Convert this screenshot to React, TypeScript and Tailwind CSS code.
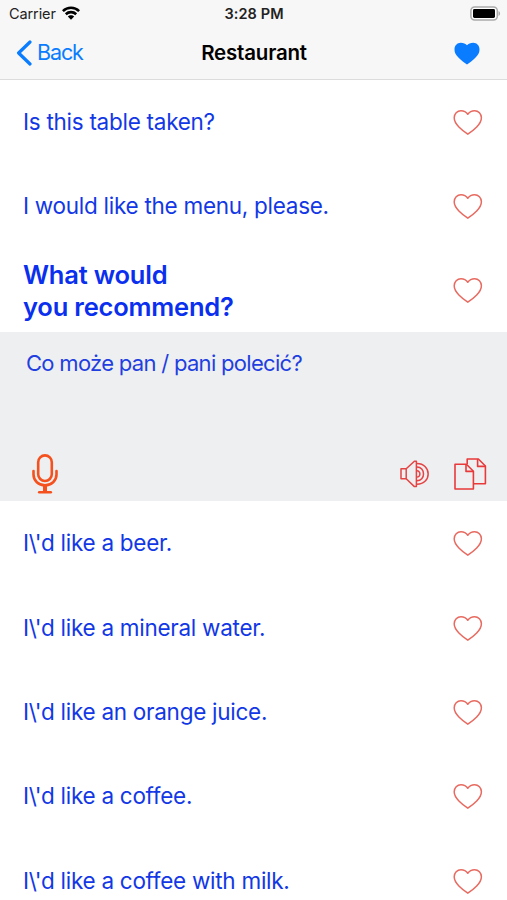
import { useState } from 'react';

interface Phrase {
  id: number;
  text: string;
}

const phrasesBefore: Phrase[] = [
  { id: 1, text: 'Is this table taken?' },
  { id: 2, text: 'I would like the menu, please.' },
];

const phrasesAfter: Phrase[] = [
  { id: 4, text: "I\\'d like a beer." },
  { id: 5, text: "I\\'d like a mineral water." },
  { id: 6, text: "I\\'d like an orange juice." },
  { id: 7, text: "I\\'d like a coffee." },
  { id: 8, text: "I\\'d like a coffee with milk." },
];

function HeartOutline({ filled }: { filled: boolean }) {
  return (
    <svg className="mt-[1px]" width="30" height="27" viewBox="0 0 30 27" fill={filled ? '#e8594f' : 'none'}>
      <path
        d="M14.8 25.2C12.4 23.6 9 21.2 5.9 18C2.9 14.9 1.2 12 1.2 8.8C1.2 4.8 4.2 1.7 8 1.7C11 1.7 13.2 2.9 14.8 5.2C16.4 2.9 18.6 1.7 21.6 1.7C25.4 1.7 28.4 4.8 28.4 8.8C28.4 12 26.7 14.9 23.7 18C20.6 21.2 17.2 23.6 14.8 25.2Z"
        stroke="#e8695f"
        strokeWidth="1.5"
        strokeLinejoin="round"
      />
    </svg>
  );
}

function StatusBar() {
  return (
    <div className="grid h-[28px] grid-cols-[1fr_auto_1fr] items-center pl-[8px] pr-[6px] text-[#222]">
      <div className="flex items-center gap-[6px]">
        <span className="pl-px text-[14.5px] leading-none tracking-[-0.1px]">Carrier</span>
        <svg className="-mt-[2px]" width="18" height="14" viewBox="0 0 18 14" fill="none" stroke="#000" strokeWidth="2.6">
          <path d="M0.9 5.1C5.4 0.7 12.6 0.7 17.1 5.1" />
          <path d="M3.8 8.2C6.7 5.4 11.3 5.4 14.2 8.2" />
          <path d="M9 13.8L5.8 10.6C7.5 8.9 10.5 8.9 12.2 10.6Z" fill="#000" stroke="none" />
        </svg>
      </div>
      <span className="-ml-px text-center text-[14.5px] font-semibold leading-none tracking-[0.1px]">3:28 PM</span>
      <svg className="-mt-[2px] justify-self-end" width="31" height="15" viewBox="0 0 31 15">
        <rect x="0.9" y="0.9" width="26.4" height="13.2" rx="3.8" fill="#fff" stroke="#aaa" strokeWidth="1.5" />
        <rect x="3" y="3" width="22" height="9" rx="1.4" fill="#000" />
        <path d="M28.5 5C30.6 5.8 30.6 9.2 28.5 10Z" fill="#aaa" />
      </svg>
    </div>
  );
}

function NavBar() {
  return (
    <div className="grid h-[50px] grid-cols-[1fr_auto_1fr] items-center pl-[16px] pr-[16px]">
      <button className="flex items-center gap-[5px] text-[#0a7cff]">
        <svg width="16" height="26" viewBox="0 0 16 26" fill="none">
          <path d="M14 2L2.6 13L14 24" stroke="currentColor" strokeWidth="3.2" strokeLinecap="round" strokeLinejoin="round" />
        </svg>
        <span className="text-[21.5px] leading-none tracking-[-1.1px]">Back</span>
      </button>
      <h1 className="whitespace-nowrap pl-px text-center text-[20.5px] font-semibold leading-none tracking-[-0.2px] text-black">
        Restaurant
      </h1>
      <svg className="mr-[11px] justify-self-end" width="26" height="23" viewBox="0 0 26 23">
        <path
          d="M13 22.4C11 21 7.5 18.5 4.4 15.4C1.8 12.8 0.5 10.6 0.5 7.4C0.5 3.6 3.2 0.8 6.8 0.8C9.4 0.8 11.7 1.8 13 3.2C14.3 1.8 16.6 0.8 19.2 0.8C22.8 0.8 25.5 3.6 25.5 7.4C25.5 10.6 24.2 12.8 21.6 15.4C18.5 18.5 15 21 13 22.4Z"
          fill="#0a7cff"
        />
      </svg>
    </div>
  );
}

function TranslationPanel() {
  return (
    <div className="flex h-[168.8px] flex-col justify-between bg-[#eeeff1] pl-[26px] pr-[20px] pt-[15.5px]">
      <p className="text-[22px] leading-[30px] tracking-[-0.7px] text-[#1f3fe0]">Co może pan / pani polecić?</p>
      <div className="flex items-center pb-[7px] pl-[6px]">
        <svg width="26" height="40" viewBox="0 0 26 40" fill="none" stroke="#f4511e" strokeWidth="2.6" strokeLinecap="round">
          <rect x="6.2" y="1.4" width="13.6" height="25.6" rx="6.8" />
          <path d="M1.5 17V20.5C1.5 26.8 6.6 31.3 13 31.3C19.4 31.3 24.5 26.8 24.5 20.5V17" />
          <path d="M13 31.3V38" strokeWidth="4" strokeLinecap="butt" />
          <path d="M7.2 38.2H18.8" />
        </svg>
        <svg className="ml-auto" width="30" height="28" viewBox="0 0 30 28" fill="none" stroke="#e54444" strokeWidth="1.5" strokeLinejoin="round">
          <path d="M1 8.8H6.2V18.8H1Z" />
          <path d="M6.2 8.8L14.4 1.2H16.4V26.6H14.4L6.2 18.8" />
          <path d="M16.6 10.8C21 10.4 21 17.4 16.6 17" />
          <path d="M16.6 7C25.8 6.6 25.8 21.2 16.6 20.8" />
          <path d="M16.6 3.6C32 3.4 32 24.4 16.6 24.2" />
        </svg>
        <svg className="ml-[24px]" width="33" height="32" viewBox="0 0 33 32" fill="none" stroke="#e83a3a" strokeWidth="1.6" strokeLinejoin="round">
          <path d="M1 6.3H12.4L19.4 13.2V31H1Z" />
          <path d="M12 6.3V13.4H19.4" />
          <path d="M13.2 6.3V1H24.4L31.4 8V25.8H19.4" />
          <path d="M23.6 1V8.4H31.4" />
        </svg>
      </div>
    </div>
  );
}

export default function App() {
  const [favorites, setFavorites] = useState<number[]>([]);

  const toggleFavorite = (id: number) => {
    setFavorites((prev) => (prev.includes(id) ? prev.filter((f) => f !== id) : [...prev, id]));
  };

  const renderPhrase = (phrase: Phrase) => (
    <li key={phrase.id} className="flex h-[84.3px] items-center justify-between pl-[23px] pr-[24px]">
      <span className="whitespace-nowrap text-[22.5px] leading-[30px] tracking-[-0.27px] text-[#1238e6]">
        {phrase.text}
      </span>
      <button onClick={() => toggleFavorite(phrase.id)}>
        <HeartOutline filled={favorites.includes(phrase.id)} />
      </button>
    </li>
  );

  return (
    <div className="h-[900px] w-[507px] overflow-hidden bg-white font-['Inter',sans-serif]">
      {/* Header */}
      <header className="h-[79.5px] border-b border-[#dcdcdc] bg-[#f7f7f7]">
        <StatusBar />
        <NavBar />
      </header>

      {/* Phrase list */}
      <ul>{phrasesBefore.map(renderPhrase)}</ul>

      {/* Expanded phrase with its translation */}
      <div className="flex h-[84.3px] items-center justify-between pl-[23px] pr-[24px]">
        <span className="pt-[2px] text-[25.5px] font-semibold leading-[32px] tracking-[-0.2px] text-[#0a2fee]">
          What would
          <br />
          you recommend?
        </span>
        <button onClick={() => toggleFavorite(3)}>
          <HeartOutline filled={favorites.includes(3)} />
        </button>
      </div>
      <TranslationPanel />

      <ul>{phrasesAfter.map(renderPhrase)}</ul>
    </div>
  );
}
